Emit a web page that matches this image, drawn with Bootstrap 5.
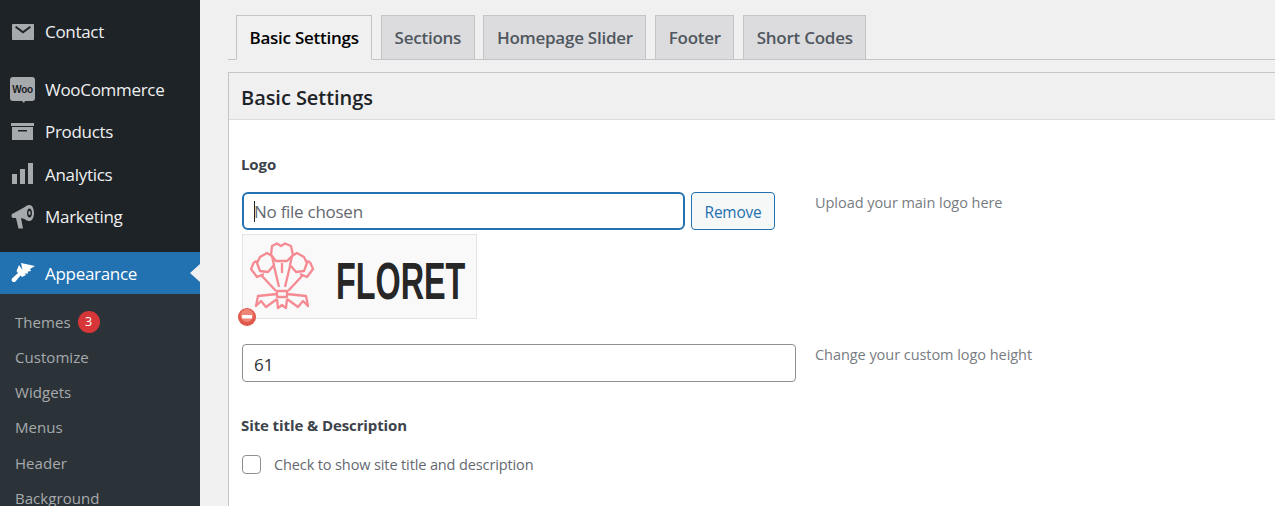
<!DOCTYPE html>
<html lang="en"><head><meta charset="utf-8"><title>Theme Options</title>
<link href="https://cdn.jsdelivr.net/npm/bootstrap@5.3.0/dist/css/bootstrap.min.css" rel="stylesheet">
<style>
html,body{height:506px;overflow:hidden;background:#f0f0f1;font-family:"Open Sans","Noto Sans",sans-serif}
.wp-shell{height:506px;overflow:hidden}
.wp-side{width:200px;flex:none;background:#1d2327;color:#f0f0f1;padding-top:11px;height:506px;overflow:hidden}
.wp-item{height:42.4px;display:flex;align-items:center;color:#f0f0f1;text-decoration:none;font-size:17px;letter-spacing:-.3px;position:relative}
.wp-ico{width:45px;flex:none;display:flex;justify-content:center}
.wp-ico svg{display:block;fill:#a7aaad}
.wp-gap{height:15px}
.wp-gap2{height:13.900px}
.wp-active{background:#2271b1;color:#fff;height:42px;padding-top:1px}
.wp-active svg{fill:#fff}
.wp-active::after{content:"";position:absolute;right:0;top:12px;border:8px solid transparent;border-right-color:#f0f0f1;border-left:0;border-top-width:9px;border-bottom-width:9px;border-right-width:10px}
.wp-sub{background:#2c3338;padding-top:10.600px;height:300px}
.wp-sub a{display:flex;align-items:center;height:35.2px;padding-left:15px;color:#a7aaad;text-decoration:none;font-size:15px;letter-spacing:.05px}
.wp-count{width:22px;height:22px;border-radius:50%;background:#d63638;color:#fff;font-size:12.5px;display:inline-flex;align-items:center;justify-content:center;margin-left:7px}
.wp-main{flex:1;min-width:0;padding:15px 0 0 28px}
.wp-tabs{border-bottom:1px solid #c3c4c7;height:45px;flex-wrap:nowrap;padding-left:8px;gap:8.800px}
.wp-tabs .nav-link{height:45px;padding:0 12.500px;display:flex;align-items:center;background:#dcdcde;color:#50575e;border:1px solid #c3c4c7;border-radius:0;font-size:17px;font-weight:600;letter-spacing:-.25px;margin-bottom:0}
.wp-tabs .nav-link.active{background:#f0f0f1;color:#000;border-color:#c3c4c7 #c3c4c7 #f0f0f1}
.wp-panel{margin-top:12px;border:1px solid #c3c4c7;border-right:0;border-radius:0;background:#fff;height:500px}
.wp-panel .card-header{height:47px;padding:3px 12px 0;background:#f0f0f1;border-bottom:1px solid #dcdcde;border-radius:0;display:flex;align-items:center;color:#1d2327;font-size:20px;font-weight:600;letter-spacing:-.05px}
.wp-panel .card-body{padding:34px 13px 0}
.wp-lbl{font-size:15px;font-weight:700;color:#3c434a;letter-spacing:-.1px;line-height:20px;margin:0 -1px}
.wp-logo-row{margin-top:18px}
.wp-fields{width:534px;flex:none}
.wp-help{color:#787c82;font-size:14.5px;letter-spacing:-.05px;margin-left:39px;padding-top:1px;line-height:20px}
.wp-help-num{margin-left:19px;margin-top:25px}
.wp-file-wrap{position:relative;flex:none}
.wp-file{width:443px;height:38px;border:2px solid #2271b1;border-radius:6px;font-size:17px;color:#50575e;padding:1px 10px 0;letter-spacing:-.27px;box-shadow:none}
.wp-file::placeholder{color:#646970;opacity:1}
.wp-file:focus{border-color:#2271b1;box-shadow:none}
.wp-caret{position:absolute;left:12px;top:9px;width:1px;height:21px;background:#1d2327}
.wp-remove{width:84px;height:38px;margin-left:6px;padding:3px 0 0;background:#f6f7f7;border:1px solid #2271b1;border-radius:4px;color:#2271b1;font-size:15.4px;letter-spacing:-.2px;flex:none}
.wp-thumb{width:235px;height:85px;margin-top:4px;background:#f9f9f9;border:1px solid #e4e4e4;position:relative;display:flex;align-items:flex-start}
.wp-flower{margin:6px 0 0 7px;flex:none}
.wp-floret{display:block;font-family:"Liberation Sans",sans-serif;font-weight:700;font-size:52px;line-height:1;color:#272727;margin:20px 0 0 20px;transform:scaleX(.622);transform-origin:left center}
.wp-del{position:absolute;left:-5px;bottom:-8px;display:block}
.wp-num{width:554px;height:38px;margin-top:25px;border:1px solid #8c8f94;border-radius:4px;font-size:17px;color:#2c3338;padding:2px 11px 0}
.wp-lbl-site{margin-top:33px}
.wp-check-row{margin-top:19px}
.wp-check{width:19px;height:19px;margin:0;border:1px solid #8c8f94;border-radius:4px;flex:none}
.wp-check-label{color:#646970;font-size:14.5px;letter-spacing:-.12px;margin-left:13px}
</style></head>
<body>
<div class="d-flex wp-shell">
<aside class="wp-side">
  <a class="wp-item" href="#"><span class="wp-ico"><svg width="22" height="16" viewBox="0 0 22 16"><path fill-rule="evenodd" d="M0 1c0-.6.4-1 1-1h20c.6 0 1 .4 1 1v14c0 .6-.4 1-1 1H1c-.6 0-1-.4-1-1zM3 3.500l8 6 8-6-1.200-1.500L11 7 4.200 2z"/></svg></span>Contact</a>
  <div class="wp-gap"></div>
  <a class="wp-item" href="#"><span class="wp-ico"><svg width="25" height="26" viewBox="0 0 25 26"><path d="M3 0h19c2 0 3 1 3 3v18c0 2-1 3-3 3h-7l-1 2-2-2H3c-2 0-3-1-3-3V3c0-2 1-3 3-3z"/><text x="12.500" y="15.500" text-anchor="middle" font-family="Liberation Sans,sans-serif" font-size="10" font-weight="700" fill="#1d2327">Woo</text></svg></span>WooCommerce</a>
  <a class="wp-item" href="#"><span class="wp-ico"><svg width="23" height="17" viewBox="0 0 23 17"><path fill-rule="evenodd" d="M0 0h23v3H0zM1 4h21v13H1zM7 7v1.500h9V7z"/></svg></span>Products</a>
  <a class="wp-item" href="#"><span class="wp-ico"><svg width="21" height="22" viewBox="0 0 21 22"><path d="M0 11h5v10H0zM8 6h5v15H8zM16 0h5v21h-5z"/></svg></span>Analytics</a>
  <a class="wp-item" href="#"><span class="wp-ico"><svg width="23" height="24" viewBox="0 0 23 24"><path fill-rule="evenodd" d="M2 8.500l11-6C15 .8 17 0 18.500 0 21 0 23 3.500 23 8s-2 8-4.500 8c-1.500 0-3-.6-5-2l-3.500-1 2 10.500H7.500L5 13H2C0 13 0 8.500 2 8.500zM18.500 3.500c-1.500 0-2.500 2-2.500 4.500s1 4.500 2.500 4.500S21 10.500 21 8s-1-4.500-2.500-4.500z"/><ellipse cx="18.500" cy="8" rx="1.100" ry="2"/></svg></span>Marketing</a>
  <div class="wp-gap2"></div>
  <a class="wp-item wp-active" href="#"><span class="wp-ico"><svg width="24" height="20" viewBox="0 0 24 20"><path d="M10 0l14 3-5 3 1 2-3 .5-.5 2.500-3-1-1 2zM8 2l7 10-4 2-1.500-1.500-5 6c-2 1.800-5-.7-3.500-3l6-5.500-1.500-2z"/></svg></span>Appearance</a>
  <div class="wp-sub">
    <a href="#">Themes<span class="wp-count">3</span></a>
    <a href="#">Customize</a><a href="#">Widgets</a><a href="#">Menus</a><a href="#">Header</a><a href="#">Background</a>
  </div>
</aside>
<main class="wp-main">
  <nav class="nav nav-tabs wp-tabs">
    <a class="nav-link active" href="#">Basic Settings</a>
    <a class="nav-link" href="#">Sections</a>
    <a class="nav-link" href="#">Homepage Slider</a>
    <a class="nav-link" href="#">Footer</a>
    <a class="nav-link" href="#">Short Codes</a>
  </nav>
  <section class="card wp-panel">
    <div class="card-header">Basic Settings</div>
    <div class="card-body">
      <div class="wp-lbl">Logo</div>
      <div class="d-flex align-items-start wp-logo-row">
        <div class="wp-fields">
          <div class="d-flex">
            <div class="wp-file-wrap">
              <input class="form-control wp-file" type="text" placeholder="No file chosen" aria-label="Logo file">
              <span class="wp-caret"></span>
            </div>
            <button class="btn wp-remove" type="button">Remove</button>
          </div>
        </div>
        <div class="wp-help">Upload your main logo here</div>
      </div>
      <div class="wp-thumb">
        <svg class="wp-flower" width="66" height="74" viewBox="0 0 66 74" fill="none" stroke="#f58a92" stroke-width="2.300" stroke-linejoin="round">
          <defs><g id="wp-half">
            <path d="M10 16l7-4 5 3 2 9-6 7-8-1-3-8zM4 21l5-1M4 21l-3 7 6 8 7-3"/>
            <path d="M11 34l15 16M24 25l5 21M27 53L8 55 6 65l5-5 5 6 11-8"/>
          </g></defs>
          <use href="#wp-half"/>
          <use href="#wp-half" transform="matrix(-1 0 0 1 64 0)"/>
          <path d="M22 5l5-2.500L31 5l4-2.500L41 5l2 9-6 6H26l-5-6zM32 22v10M27 50h10v6H27zM27 58l1 9 4-3 4 3 1-9"/>
        </svg>
        <span class="wp-floret">FLORET</span>
        <svg class="wp-del" width="18" height="18" viewBox="0 0 18 18"><circle cx="9" cy="9" r="9" fill="#e0584c"/><circle cx="9" cy="7.500" r="6.500" fill="#ee8476"/><rect x="4" y="7" width="10" height="3.500" rx="1" fill="#fff"/></svg>
      </div>
      <div class="d-flex align-items-start">
        <input class="form-control wp-num" type="text" value="61" aria-label="Logo height">
        <div class="wp-help wp-help-num">Change your custom logo height</div>
      </div>
      <div class="wp-lbl wp-lbl-site">Site title &amp; Description</div>
      <div class="d-flex align-items-center wp-check-row">
        <input class="form-check-input wp-check" type="checkbox" id="cb" aria-label="Show title">
        <label class="wp-check-label" for="cb">Check to show site title and description</label>
      </div>
    </div>
  </section>
</main>
</div>
<script src="https://cdn.jsdelivr.net/npm/bootstrap@5.3.0/dist/js/bootstrap.bundle.min.js"></script>
</body></html>
